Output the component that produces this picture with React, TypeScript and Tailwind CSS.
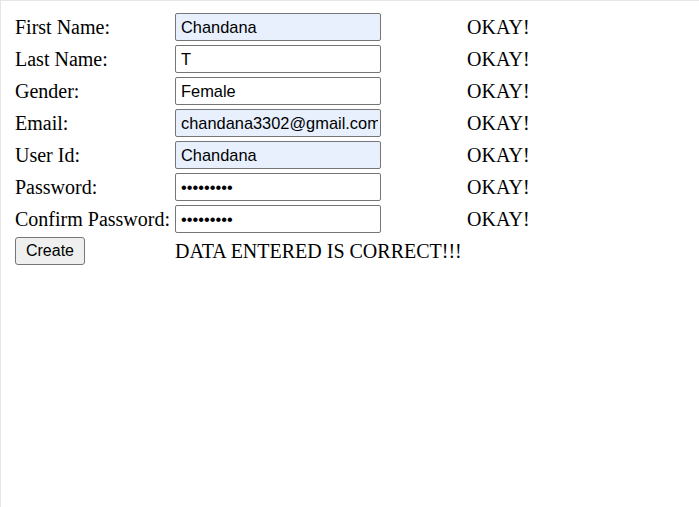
import React from 'react';

const rows = [
  { label: 'First Name:', value: 'Chandana', type: 'text', filled: true },
  { label: 'Last Name:', value: 'T', type: 'text', filled: false },
  { label: 'Gender:', value: 'Female', type: 'text', filled: false },
  { label: 'Email:', value: 'chandana3302@gmail.com', type: 'text', filled: true },
  { label: 'User Id:', value: 'Chandana', type: 'text', filled: true },
  { label: 'Password:', value: 'chandana3', type: 'password', filled: false },
  { label: 'Confirm Password:', value: 'chandana3', type: 'password', filled: false },
];

export default function App() {
  return (
    <div className="min-h-[507px] w-[699px] bg-white border-l border-t border-[#e6e6e6] pt-[10px] pl-[14px] text-black font-['Liberation_Serif',serif] text-[20px]">
      {rows.map((r) => (
        <div key={r.label} className="flex items-center h-8">
          <div className="w-[160px] shrink-0 leading-none whitespace-nowrap">{r.label}</div>
          <input
            readOnly
            type={r.type}
            value={r.value}
            className={
              'w-[206px] h-[28px] shrink-0 border border-[#767676] rounded-[2px] pl-[5px] pr-[2px] outline-none text-[16.4px] font-[Arial,"Liberation_Sans",sans-serif] ' +
              (r.filled ? 'bg-[#e8f0fe]' : 'bg-white')
            }
          />
          <div className="ml-[86px] leading-none">OKAY!</div>
        </div>
      ))}
      <div className="flex items-center h-8">
        <div className="w-[160px] shrink-0 flex items-center">
          <button className="w-[70px] h-[28px] bg-[#efefef] border border-[#767676] rounded-[3px] text-[16px] font-['Liberation_Sans',Arial,sans-serif] leading-none">
            Create
          </button>
        </div>
        <div className="leading-none">DATA ENTERED IS CORRECT!!!</div>
      </div>
    </div>
  );
}
